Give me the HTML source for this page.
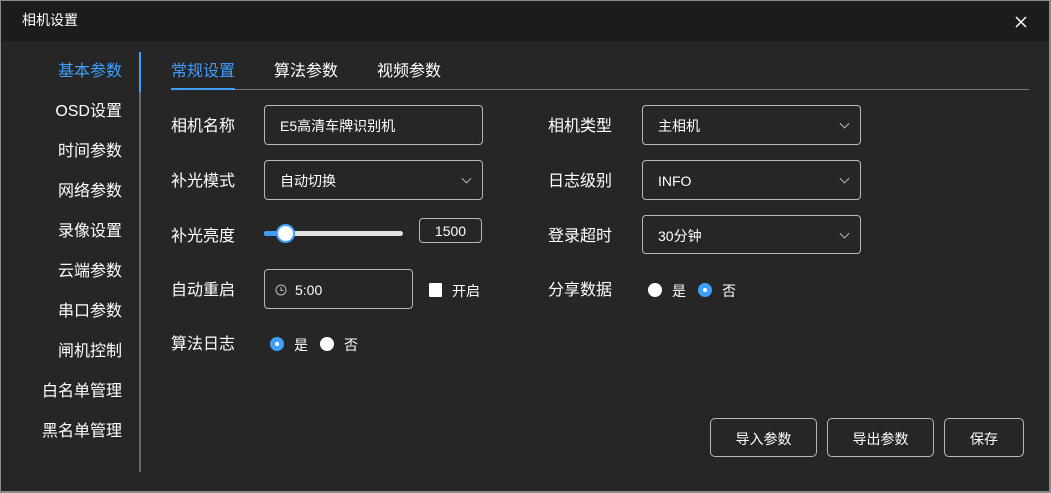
<!DOCTYPE html>
<html><head><meta charset="utf-8"><style>
*{margin:0;padding:0;box-sizing:border-box}
body{width:1051px;height:493px;background:#262626;font-family:"Liberation Sans","Noto Sans CJK SC",sans-serif;color:#fff;position:relative;overflow:hidden}
.frame{position:absolute;left:0;top:0;width:1051px;height:493px;border:1px solid #8a8a8a;border-bottom:2px solid #8a8a8a;border-right:2px solid #8a8a8a}
.hdr{position:absolute;left:1px;top:1px;width:1048px;height:40px;background:#1c1c1c}
.a{position:absolute;white-space:nowrap}
.side{position:absolute;right:929px;font-size:16px;line-height:20px;text-align:right}
.lbl{position:absolute;left:171px;font-size:16px;line-height:20px}
.box{position:absolute;border:1px solid #b8b8b8;border-radius:4px;font-size:14px;line-height:20px;padding-left:15px;padding-top:2px;display:flex;align-items:center}
.chev{position:absolute;right:12px;top:50%;width:7px;height:7px;border-right:1px solid #bbb;border-bottom:1px solid #bbb;transform:translateY(-70%) rotate(45deg)}
.btn{position:absolute;top:418px;height:39px;border:1px solid #b8b8b8;border-radius:5px;font-size:14px;padding-top:2px;display:flex;align-items:center;justify-content:center}
.rw{position:absolute;width:14px;height:14px;border-radius:50%;background:#fff}
.rb{position:absolute;width:14px;height:14px;border-radius:50%;background:#409eff}
.rb::after{content:"";position:absolute;left:5px;top:5px;width:4px;height:4px;border-radius:50%;background:#fff}
.t{position:absolute;font-size:14px;line-height:16px}
</style></head><body>
<div class="hdr"></div>
<div class="a" style="left:22px;top:11px;font-size:14px;line-height:18px">相机设置</div>
<svg class="a" style="left:1015px;top:16px" width="12" height="12"><path d="M1 1L11 11M11 1L1 11" stroke="#fff" stroke-width="1.5"/></svg>
<div class="a" style="left:139px;top:52px;width:2px;height:420px;background:#6a6a6a"></div>
<div class="a" style="left:139px;top:52px;width:2px;height:40px;background:#409eff"></div>
<div class="side" style="top:62px;color:#409eff">基本参数</div>
<div class="side" style="top:102px">OSD设置</div>
<div class="side" style="top:142px">时间参数</div>
<div class="side" style="top:182px">网络参数</div>
<div class="side" style="top:222px">录像设置</div>
<div class="side" style="top:262px">云端参数</div>
<div class="side" style="top:302px">串口参数</div>
<div class="side" style="top:342px">闸机控制</div>
<div class="side" style="top:382px">白名单管理</div>
<div class="side" style="top:422px">黑名单管理</div>
<div class="a" style="left:171px;top:62px;font-size:16px;line-height:20px;color:#409eff">常规设置</div>
<div class="a" style="left:274px;top:62px;font-size:16px;line-height:20px">算法参数</div>
<div class="a" style="left:377px;top:62px;font-size:16px;line-height:20px">视频参数</div>
<div class="a" style="left:171px;top:89px;width:858px;height:1px;background:#777"></div>
<div class="a" style="left:171px;top:88px;width:64px;height:2px;background:#409eff"></div>
<div class="lbl" style="top:117px">相机名称</div>
<div class="lbl" style="top:172px">补光模式</div>
<div class="lbl" style="top:227px">补光亮度</div>
<div class="lbl" style="top:281px">自动重启</div>
<div class="lbl" style="top:335px">算法日志</div>
<div class="lbl" style="left:548px;top:117px">相机类型</div>
<div class="lbl" style="left:548px;top:172px">日志级别</div>
<div class="lbl" style="left:548px;top:227px">登录超时</div>
<div class="lbl" style="left:548px;top:281px">分享数据</div>
<div class="box" style="left:264px;top:105px;width:219px;height:40px">E5高清车牌识别机</div>
<div class="box" style="left:264px;top:160px;width:219px;height:40px">自动切换<span class="chev"></span></div>
<div class="box" style="left:642px;top:105px;width:219px;height:40px">主相机<span class="chev"></span></div>
<div class="box" style="left:642px;top:160px;width:219px;height:40px">INFO<span class="chev"></span></div>
<div class="box" style="left:642px;top:215px;width:219px;height:39px">30分钟<span class="chev"></span></div>
<div class="a" style="left:264px;top:231px;width:139px;height:5px;border-radius:3px;background:#e4e4e4"></div>
<div class="a" style="left:264px;top:231px;width:22px;height:5px;border-radius:3px;background:#409eff"></div>
<div class="a" style="left:276px;top:224px;width:19px;height:19px;border-radius:50%;background:#fff;border:2px solid #409eff"></div>
<div class="box" style="left:419px;top:218px;width:63px;height:25px;padding:1px 0 0 0;justify-content:center">1500</div>
<div class="box" style="left:264px;top:269px;width:149px;height:40px;padding-left:10px"><svg width="12" height="12" style="margin-right:8px"><circle cx="6" cy="6" r="5" fill="none" stroke="#bbb"/><path d="M6 3V6.5H8.5" fill="none" stroke="#bbb"/></svg>5:00</div>
<div class="a" style="left:429px;top:283px;width:13px;height:14px;background:#fff;border-radius:1px"></div>
<div class="t" style="left:452px;top:283px">开启</div>
<div class="rw" style="left:648px;top:283px"></div><div class="t" style="left:672px;top:283px">是</div>
<div class="rb" style="left:698px;top:283px"></div><div class="t" style="left:722px;top:283px">否</div>
<div class="rb" style="left:270px;top:337px"></div><div class="t" style="left:294px;top:337px">是</div>
<div class="rw" style="left:320px;top:337px"></div><div class="t" style="left:344px;top:337px">否</div>
<div class="btn" style="left:710px;width:107px">导入参数</div>
<div class="btn" style="left:827px;width:107px">导出参数</div>
<div class="btn" style="left:944px;width:80px">保存</div>
<div class="frame"></div>
</body></html>
